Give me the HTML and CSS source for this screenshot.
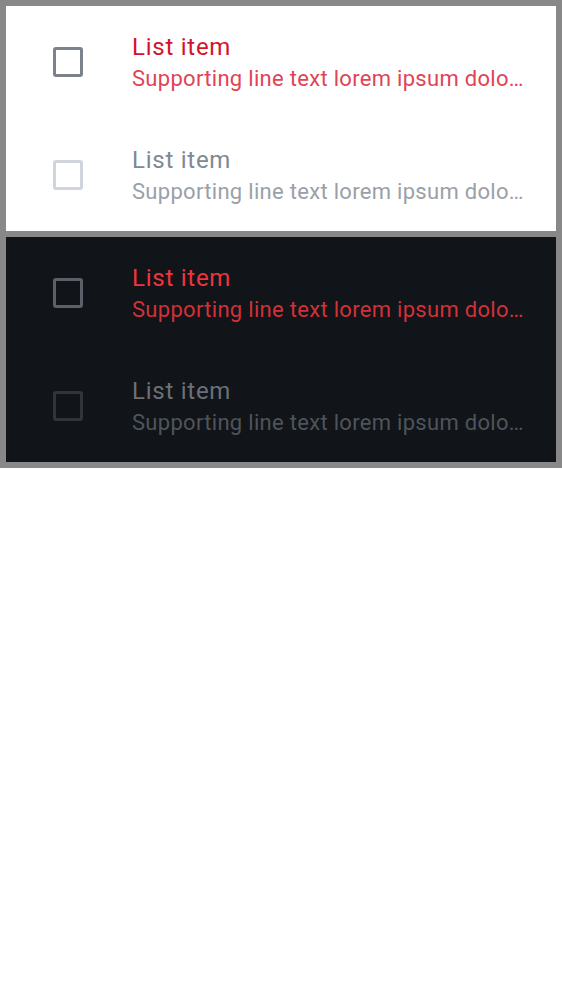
FILE: index.html
```html
<!DOCTYPE html>
<html>
<head>
<meta charset="utf-8">
<link rel="stylesheet" href="styles.css">
</head>
<body>
<div class="frame">
  <div class="panel light">
    <div class="item">
      <span class="box"></span>
      <div class="texts">
        <div class="title">List item</div>
        <div class="support">Supporting line text lorem ipsum dolor sit amet, consectetur.</div>
      </div>
    </div>
    <div class="item disabled">
      <span class="box"></span>
      <div class="texts">
        <div class="title">List item</div>
        <div class="support">Supporting line text lorem ipsum dolor sit amet, consectetur.</div>
      </div>
    </div>
  </div>
  <div class="panel dark">
    <div class="item">
      <span class="box"></span>
      <div class="texts">
        <div class="title">List item</div>
        <div class="support">Supporting line text lorem ipsum dolor sit amet, consectetur.</div>
      </div>
    </div>
    <div class="item disabled">
      <span class="box"></span>
      <div class="texts">
        <div class="title">List item</div>
        <div class="support">Supporting line text lorem ipsum dolor sit amet, consectetur.</div>
      </div>
    </div>
  </div>
</div>
</body>
</html>
```
FILE: styles.css
```css
html, body {
  margin: 0;
  padding: 0;
  background: #ffffff;
}
body {
  font-family: Roboto, "Noto Sans", sans-serif;
}
.frame {
  background: #888888;
  padding: 6px;
  display: flex;
  flex-direction: column;
  gap: 6px;
}
.panel {
  height: 225px;
  display: flex;
  flex-direction: column;
}
.light { background: #ffffff; }
.dark { background: #111418; }
.item {
  flex: 1;
  display: flex;
  align-items: center;
  padding: 0 30px 0 47px;
  min-width: 0;
}
.box {
  flex: none;
  width: 30px;
  height: 30px;
  box-sizing: border-box;
  border: 3px solid #7b828c;
  border-radius: 3px;
  margin-right: 49px;
}
.texts {
  flex: 1;
  min-width: 0;
  padding-top: 2px;
}
.title {
  font-size: 24px;
  line-height: 32px;
  letter-spacing: 0.75px;
  white-space: nowrap;
}
.support {
  font-size: 22px;
  line-height: 32px;
  letter-spacing: 0.3px;
  white-space: nowrap;
  overflow: hidden;
  text-overflow: ellipsis;
}
.light .title { color: #d3132a; }
.light .support { color: #e04456; }
.light .disabled .box { border-color: #d0d5dc; }
.light .disabled .title { color: #7f8893; }
.light .disabled .support { color: #9aa0a8; }
.dark .box { border-color: #5c6169; }
.dark .title { color: #f0343d; }
.dark .support { color: #d43038; }
.dark .disabled .box { border-color: #30353b; }
.dark .disabled .title { color: #6b7078; }
.dark .disabled .support { color: #4f545b; }
```
